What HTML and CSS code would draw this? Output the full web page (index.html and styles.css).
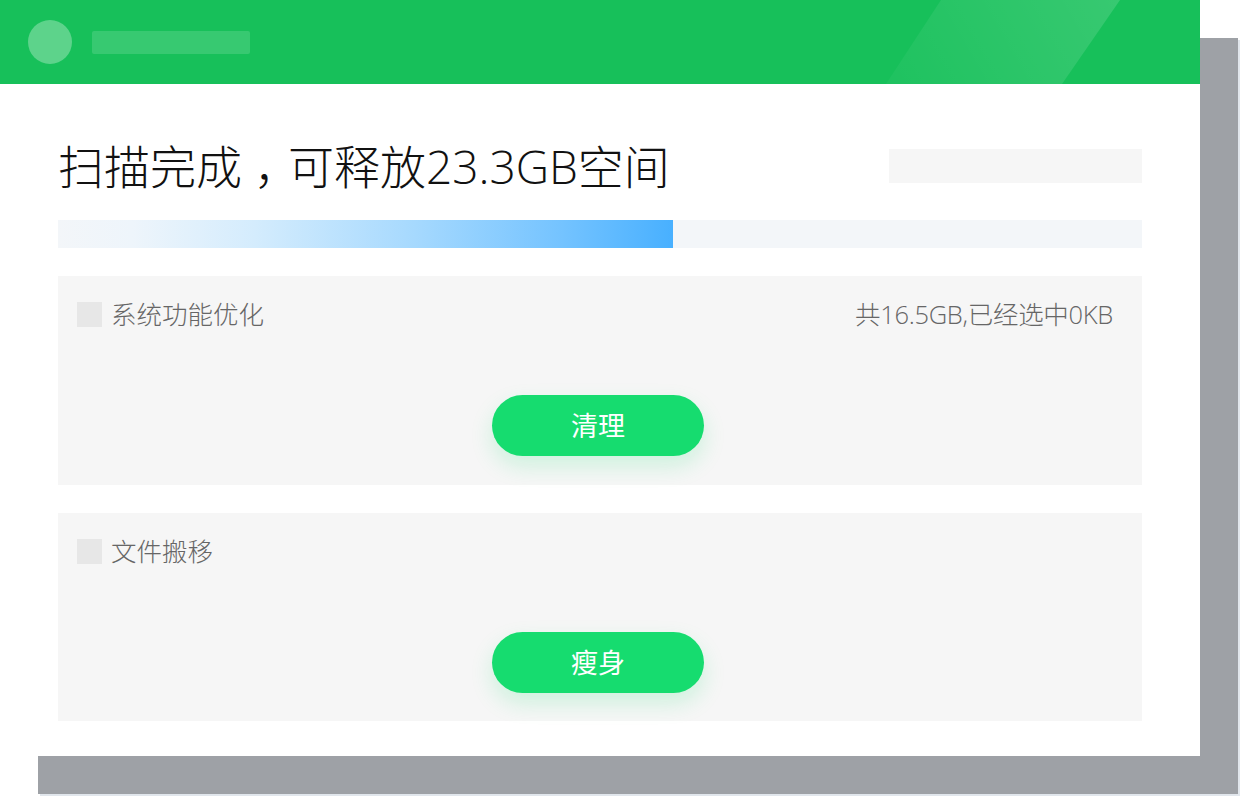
FILE: index.html
```html
<!DOCTYPE html>
<html lang="zh-CN">
<head>
<meta charset="utf-8">
<title>扫描完成</title>
<link rel="stylesheet" href="styles.css">
</head>
<body>
<div class="window">
  <header class="header">
    <div class="avatar"></div>
    <div class="title-bar"></div>
  </header>
  <main class="content">
    <div class="title-row">
      <h1 class="title">扫描完成<span class="punct">，</span>可释放23.3GB空间</h1>
      <div class="placeholder"></div>
    </div>
    <div class="progress"><div class="progress-fill" style="width: 56.7%"></div></div>
    <section class="panel">
      <div class="panel-head">
        <span class="checkbox"></span>
        <span class="label">系统功能优化</span>
        <span class="summary">共16.5GB,已经选中0KB</span>
      </div>
      <div class="panel-action"><button class="btn">清理</button></div>
    </section>
    <section class="panel">
      <div class="panel-head">
        <span class="checkbox"></span>
        <span class="label">文件搬移</span>
      </div>
      <div class="panel-action"><button class="btn">瘦身</button></div>
    </section>
  </main>
</div>
</body>
</html>
```
FILE: styles.css
```css
* { box-sizing: border-box; }
html, body { margin: 0; padding: 0; background: #ffffff; }
body {
  width: 1240px;
  height: 796px;
  overflow: hidden;
  font-family: "Open Sans", "Noto Sans CJK SC", sans-serif;
}
.window {
  width: 1200px;
  height: 756px;
  background: #ffffff;
  box-shadow: 38px 38px 0 0 #9ea1a6, 40px 40px 0 0 #e1e6ec;
}
.header {
  position: relative;
  height: 84px;
  background: #17c05a;
  display: flex;
  align-items: center;
  padding-left: 28px;
  overflow: hidden;
}
.header::after {
  content: "";
  position: absolute;
  top: 0;
  left: 886px;
  width: 234px;
  height: 84px;
  background: linear-gradient(60deg, rgba(255,255,255,0.03) 0%, rgba(255,255,255,0.14) 100%);
  clip-path: polygon(55px 0, 234px 0, 176px 84px, 0 84px);
}
.avatar {
  width: 44px;
  height: 44px;
  border-radius: 50%;
  background: rgba(255,255,255,0.3);
}
.title-bar {
  width: 158px;
  height: 23px;
  margin-left: 20px;
  border-radius: 2px;
  background: rgba(255,255,255,0.14);
}
.content {
  padding: 52px 58px 0;
}
.title-row {
  height: 60px;
  display: flex;
  align-items: center;
  justify-content: space-between;
}
.title {
  margin: 0;
  font-size: 46px;
  font-weight: 300;
  color: #111111;
  line-height: 60px;
  letter-spacing: 0;
}
.punct {
  padding-left: 12px;
  letter-spacing: -12px;
}
.placeholder {
  width: 253px;
  height: 34px;
  background: #f6f6f6;
}
.progress {
  margin-top: 24px;
  height: 28px;
  background: #f3f6f9;
}
.progress-fill {
  height: 100%;
  background: linear-gradient(90deg, rgba(243,246,249,1) 0%, #eef5fb 12%, #d4ecfd 32%, #a6d9fe 58%, #74c3ff 82%, #48b0ff 100%);
}
.panel {
  margin-top: 28px;
  height: 209px;
  background: #f6f6f6;
  padding: 26px 29px 0 19px;
}
.panel + .panel { height: 208px; }
.panel-head {
  height: 25px;
  display: flex;
  align-items: center;
}
.checkbox {
  width: 25px;
  height: 25px;
  background: #e7e7e7;
}
.label {
  margin-left: 9px;
  margin-bottom: 4px;
  font-size: 25.5px;
  font-weight: 300;
  color: #666666;
}
.summary {
  margin-left: auto;
  margin-bottom: 4px;
  font-size: 25.5px;
  font-weight: 300;
  color: #666666;
  letter-spacing: -0.3px;
}
.panel-action {
  margin-top: 68px;
  display: flex;
  justify-content: center;
  padding-left: 6px;
}
.btn {
  width: 212px;
  height: 61px;
  border: none;
  border-radius: 31px;
  background: #16dc6f;
  color: #ffffff;
  font-family: "Open Sans", "Noto Sans CJK SC", sans-serif;
  font-size: 27px;
  font-weight: 400;
  padding: 0 0 3px;
  box-shadow: 0 10px 22px rgba(22, 220, 111, 0.18);
  cursor: pointer;
}
```
